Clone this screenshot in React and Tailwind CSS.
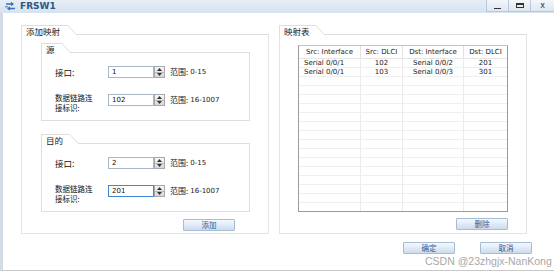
import React from 'react'

const cjk = { fontFamily: '"Noto Sans CJK SC", "Noto Sans", sans-serif' }

function Tab({ label, w }) {
    return (
        <div className="flex items-end h-[10px]">
            <div className={`${w} h-[10px] border-t border-l border-[#dedede] flex items-center pl-[4px] text-[8.5px] leading-none text-[#222] pt-[2px] whitespace-nowrap`} style={cjk}>
                {label}
            </div>
            <svg width="8" height="10" className="block">
                <line x1="0" y1="0.5" x2="8" y2="9.5" stroke="#dedede" strokeWidth="1" />
            </svg>
            <div className="flex-1 border-b border-[#dedede]" />
        </div>
    )
}

function Spinner() {
    return (
        <div className="w-[11px] h-[12px] border border-[#a8a8a8] bg-gradient-to-b from-[#f7f7f7] to-[#d8d8d8] flex flex-col">
            <div className="flex-1 flex items-center justify-center border-b border-[#b8b8b8]">
                <svg width="5" height="3"><polygon points="2.5,0 5,3 0,3" fill="#333" /></svg>
            </div>
            <div className="flex-1 flex items-center justify-center">
                <svg width="5" height="3"><polygon points="0,0 5,0 2.5,3" fill="#333" /></svg>
            </div>
        </div>
    )
}

function NumField({ value, focused }) {
    return (
        <div className="flex items-center">
            <div className={`w-[46px] h-[12px] border ${focused ? 'border-[#3d86d8]' : 'border-[#a9b6c6]'} bg-white flex items-center pl-[3px] text-[7px] text-[#111] font-['DejaVu_Sans']`}>
                {value}
            </div>
            <Spinner />
        </div>
    )
}

function Range({ text }) {
    return (
        <div className="ml-[5px] flex items-center text-[7px] text-[#222] whitespace-nowrap">
            <span className="text-[8px] leading-none" style={cjk}>范围:</span>
            <span className="ml-[2px] font-['DejaVu_Sans']">{text}</span>
        </div>
    )
}

function EndpointBox({ title, tabW, iface, dlci, focused }) {
    return (
        <div className="w-[209px] h-[78px] flex flex-col">
            <Tab label={title} w={tabW} />
            <div className="flex-1 border-l border-r border-b border-[#dedede] pl-[13px] pt-[13px] flex flex-col">
                <div className="flex items-center h-[12px]">
                    <div className="w-[53px] text-[8.5px] leading-none text-[#111] whitespace-nowrap" style={cjk}>接口:</div>
                    <NumField value={iface} />
                    <Range text="0-15" />
                </div>
                <div className="flex items-center h-[12px] mt-[16px]">
                    <div className="w-[53px] flex flex-col text-[7.5px] leading-[11px] text-[#111] pt-[5px] whitespace-nowrap" style={cjk}>
                        <span>数据链路连</span>
                        <span className="-mt-[1px]">接标识:</span>
                    </div>
                    <NumField value={dlci} focused={focused} />
                    <Range text="16-1007" />
                </div>
            </div>
        </div>
    )
}

function Btn({ children, w = 'w-[52px]' }) {
    return (
        <div className={`${w} h-[12px] border border-[#a6bbd4] rounded-[1px] bg-gradient-to-b from-[#f5f9fe] to-[#cddcef] flex items-center justify-center text-[7.5px] leading-none text-[#2d5a96]`} style={cjk}>
            {children}
        </div>
    )
}

const rows = [
    ['Serial 0/0/1', '102', 'Serial 0/0/2', '201'],
    ['Serial 0/0/1', '103', 'Serial 0/0/3', '301'],
]

function MapTable() {
    const blank = Array.from({ length: 15 }, () => ['', '', '', ''])
    const all = [...rows, ...blank]
    const cols = ['w-[62px]', 'w-[42px]', 'w-[61px]', 'flex-1']
    return (
        <div className="w-[210px] h-[167px] border border-[#c4c4c4] border-l-[#9a9a9a] border-r-[#9a9a9a] border-b-[#9a9a9a] overflow-hidden flex flex-col font-['DejaVu_Sans'] text-[7px] text-[#222]">
            <div className="flex h-[13px] shrink-0 border-b border-[#e6e6e6]">
                {['Src: Interface', 'Src: DLCI', 'Dst: Interface', 'Dst: DLCI'].map((h, i) => (
                    <div key={h} className={`${cols[i]} flex items-center justify-center whitespace-nowrap ${i < 3 ? 'border-r border-[#e2e2e2]' : ''}`}>{h}</div>
                ))}
            </div>
            {all.map((r, ri) => (
                <div key={ri} className="flex h-[9px] shrink-0 border-b border-[#efefef]">
                    {r.map((c, i) => (
                        <div key={i} className={`${cols[i]} flex items-center leading-none whitespace-nowrap ${i === 0 ? 'pl-[5px]' : 'justify-center'} ${i < 3 ? 'border-r border-[#ececec]' : ''}`}>{c}</div>
                    ))}
                </div>
            ))}
        </div>
    )
}

function WinBtn({ children, w }) {
    return (
        <div className={`${w} h-[12px] border-l border-b border-[#b9c8da] bg-gradient-to-b from-[#f4f7fb] to-[#dde6f0] flex items-center justify-center`}>
            {children}
        </div>
    )
}

export default function App() {
    return (
        <div className="w-[554px] h-[272px] bg-white relative overflow-hidden">
            {/* title bar */}
            <div className="h-[13px] flex items-center bg-gradient-to-b from-[#e7eef7] to-[#d6e3f1]">
                <svg width="11" height="9" className="ml-[5px]" viewBox="0 0 11 9">
                    <path d="M1 2 H8 M6 0.5 L8 2 L6 3.5" stroke="#3f72b5" strokeWidth="1.3" fill="none" />
                    <path d="M10 6.5 H3 M5 5 L3 6.5 L5 8" stroke="#3f72b5" strokeWidth="1.3" fill="none" />
                    <rect x="0" y="4" width="3" height="1.5" fill="#6c9bd6" />
                </svg>
                <div className="ml-[4px] text-[9px] font-bold leading-none text-[#2f5680] font-['DejaVu_Sans']">FRSW1</div>
                <div className="flex-1" />
                <div className="flex self-start">
                    <WinBtn w="w-[22px]">
                        <div className="w-[7px] h-[1px] bg-[#333] mt-[5px]" />
                    </WinBtn>
                    <WinBtn w="w-[22px]">
                        <div className="w-[8px] h-[5px] border border-[#333] border-t-2" />
                    </WinBtn>
                    <WinBtn w="w-[24px]">
                        <span className="text-[8px] leading-none text-[#333] font-['DejaVu_Sans']">x</span>
                    </WinBtn>
                </div>
            </div>

            {/* body */}
            <div className="h-[258px] border-l-[3px] border-b border-l-[#d3dbe5] border-b-[#c8c8c8] flex flex-col">
                <div className="flex pt-[12px] pl-[18px] gap-[10px]">
                    {/* left group */}
                    <div className="w-[248px] h-[209px] flex flex-col">
                        <Tab label="添加映射" w="w-[47px]" />
                        <div className="flex-1 border-l border-r border-b border-[#e4e4e4] pl-[19px] pr-[18px] pt-[8px] flex flex-col">
                            <EndpointBox title="源" tabW="w-[21px]" iface="1" dlci="102" />
                            <div className="mt-[13px]">
                                <EndpointBox title="目的" tabW="w-[29px]" iface="2" dlci="201" focused />
                            </div>
                            <div className="flex justify-end pr-[15px] mt-[7px]">
                                <Btn>添加</Btn>
                            </div>
                        </div>
                    </div>

                    {/* right group */}
                    <div className="w-[248px] h-[209px] flex flex-col">
                        <Tab label="映射表" w="w-[37px]" />
                        <div className="flex-1 border-l border-r border-b border-[#e4e4e4] pl-[18px] pt-[10px] flex flex-col">
                            <MapTable />
                            <div className="w-[210px] flex justify-end mt-[6px]">
                                <Btn>删除</Btn>
                            </div>
                        </div>
                    </div>
                </div>

                <div className="flex justify-end gap-[25px] pr-[22px] mt-[8px]">
                    <Btn>确定</Btn>
                    <Btn>取消</Btn>
                </div>
            </div>

            {/* watermark */}
            <div className="absolute left-[425px] top-[256px] text-[10.5px] leading-none text-[#a8a8a8] font-['Liberation_Sans'] whitespace-nowrap">
                CSDN @23zhgjx-NanKong
            </div>
        </div>
    )
}
